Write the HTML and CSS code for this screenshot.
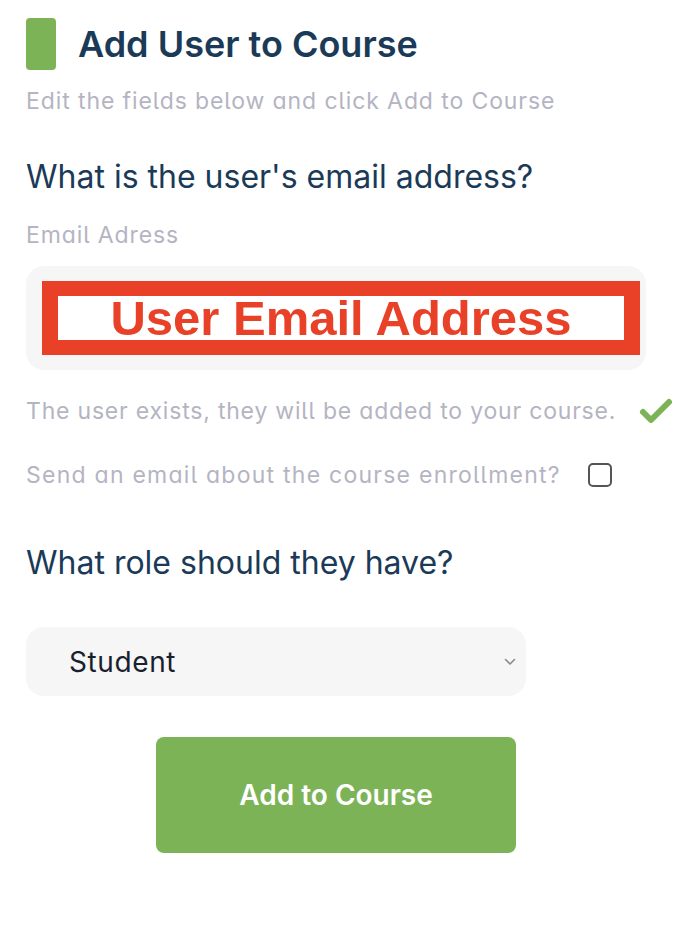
FILE: index.html
```html
<!DOCTYPE html>
<html lang="en">
<head>
<meta charset="utf-8">
<title>Add User to Course</title>
<link rel="stylesheet" href="styles.css">
</head>
<body>
<main class="panel">
  <header class="title-row">
    <span class="title-bar"></span>
    <h1 class="title">Add User to Course</h1>
  </header>
  <p class="subtitle">Edit the fields below and click Add to Course</p>

  <h2 class="question q-email">What is the user's email address?</h2>
  <label class="field-label">Email Adress</label>
  <div class="input-box">
    <div class="redact">
      <div class="redact-inner">User Email Address</div>
    </div>
  </div>

  <div class="status-row">
    <span class="muted">The user exists, they will be added to your course.</span>
    <svg class="check" width="36" height="28" viewBox="0 0 36 28"><polyline points="5,15 13,23 31,5" fill="none" stroke="#7cb356" stroke-width="6" stroke-linecap="round" stroke-linejoin="round"/></svg>
  </div>

  <div class="send-row">
    <span class="muted">Send an email about the course enrollment?</span>
    <span class="checkbox"></span>
  </div>

  <h2 class="question q-role">What role should they have?</h2>

  <div class="select-box">
    <span class="select-value">Student</span>
    <svg class="chevron" width="12" height="8" viewBox="0 0 12 8"><polyline points="1.5,1.5 6,6 10.5,1.5" fill="none" stroke="#8a8a8a" stroke-width="1.6" stroke-linecap="round" stroke-linejoin="round"/></svg>
  </div>

  <div class="button-row">
    <button class="add-btn">Add to Course</button>
  </div>
</main>
</body>
</html>
```
FILE: styles.css
```css
* { box-sizing: border-box; }
html, body { margin: 0; padding: 0; background: #ffffff; }
body { font-family: Inter, "Liberation Sans", sans-serif; }

.panel { padding: 18px 0 0 26px; width: 682px; }

.title-row { display: flex; align-items: center; gap: 22px; height: 52px; }
.title-bar { width: 30px; height: 52px; background: #7cb356; border-radius: 4px; flex: none; }
.title { margin: 0; font-size: 36px; font-weight: 600; color: #1b3a57; line-height: 1; }

.subtitle { margin: 18px 0 0; font-size: 23px; color: #b4b4c2; line-height: 26px; letter-spacing: 0.9px; font-feature-settings: "cv11" 1, "ss02" 1; }

.question { margin: 0; font-size: 32px; font-weight: 400; color: #1b3a57; line-height: 34px; }
.q-email { margin-top: 46px; }

.field-label { display: block; margin-top: 28px; font-size: 23px; color: #b4b4c2; line-height: 26px; letter-spacing: 0.9px; font-feature-settings: "cv11" 1, "ss02" 1; }

.input-box { margin-top: 18px; width: 620px; height: 104px; background: #f6f6f6; border-radius: 18px; padding: 15px 6px 15px 16px; }
.redact { height: 74px; width: 598px; background: #e94128; padding: 15px 16px; }
.redact-inner { background: #ffffff; height: 44px; display: flex; align-items: center; justify-content: center; font-family: "Liberation Sans", Arial, sans-serif; font-weight: 700; font-size: 49px; color: #e94128; line-height: 1; }

.muted { font-size: 23px; color: #b4b4c2; line-height: 26px; letter-spacing: 0.8px; font-feature-settings: "cv11" 1, "ss02" 1; }

.status-row { margin-top: 27px; display: flex; align-items: center; gap: 22px; }
.check { flex: none; }

.send-row { margin-top: 37px; display: flex; align-items: center; gap: 27px; }
.send-row .muted { letter-spacing: 1.25px; }
.checkbox { width: 24px; height: 24px; border: 2px solid #555; border-radius: 5px; flex: none; }

.q-role { margin-top: 58px; }

.select-box { margin-top: 47px; width: 500px; height: 69px; background: #f6f6f6; border-radius: 18px; display: flex; align-items: center; justify-content: space-between; padding: 0 10px 0 43px; }
.select-value { font-size: 28px; color: #1a1f2e; letter-spacing: 0.6px; }

.button-row { margin-top: 41px; padding-left: 130px; }
.add-btn { width: 360px; height: 116px; background: #7cb356; border: none; border-radius: 8px; color: #ffffff; font-family: Inter, "Liberation Sans", sans-serif; font-size: 28px; font-weight: 600; }
```
